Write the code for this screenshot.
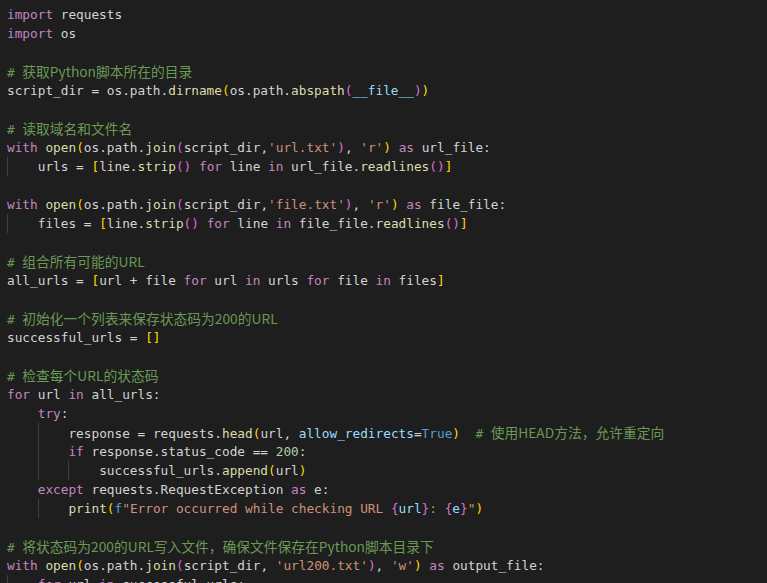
import React from 'react'

// token colours, VS Code Dark+ style
const C = {
  k: 'text-[#c586c0]',
  d: 'text-[#d4d4d4]',
  f: 'text-[#dcdcaa]',
  s: 'text-[#ce9178]',
  n: 'text-[#b5cea8]',
  p: 'text-[#9cdcfe]',
  b: 'text-[#569cd6]',
  y: 'text-[#ffd700]',
  m: 'text-[#da70d6]',
  c: 'text-[#6a9955]',
}

type Tok = [keyof typeof C, string]
type Line = { g?: number[]; t: Tok[] }

const lines: Line[] = [
  { t: [['k', 'import'], ['d', ' requests']] },
  { t: [['k', 'import'], ['d', ' os']] },
  { t: [] },
  { t: [['c', '# 获取Python脚本所在的目录']] },
  {
    t: [
      ['d', 'script_dir = os.path.'], ['f', 'dirname'], ['y', '('], ['d', 'os.path.'], ['f', 'abspath'],
      ['m', '('], ['p', '__file__'], ['m', ')'], ['y', ')'],
    ],
  },
  { t: [] },
  { t: [['c', '# 读取域名和文件名']] },
  {
    t: [
      ['k', 'with'], ['d', ' '], ['f', 'open'], ['y', '('], ['d', 'os.path.'], ['f', 'join'], ['m', '('],
      ['d', 'script_dir,'], ['s', "'url.txt'"], ['m', ')'], ['d', ', '], ['s', "'r'"], ['y', ')'], ['d', ' '],
      ['k', 'as'], ['d', ' url_file:'],
    ],
  },
  {
    g: [1],
    t: [
      ['d', 'urls = '], ['y', '['], ['d', 'line.'], ['f', 'strip'], ['m', '()'], ['d', ' '], ['k', 'for'],
      ['d', ' line '], ['k', 'in'], ['d', ' url_file.'], ['f', 'readlines'], ['m', '()'], ['y', ']'],
    ],
  },
  { t: [] },
  {
    t: [
      ['k', 'with'], ['d', ' '], ['f', 'open'], ['y', '('], ['d', 'os.path.'], ['f', 'join'], ['m', '('],
      ['d', 'script_dir,'], ['s', "'file.txt'"], ['m', ')'], ['d', ', '], ['s', "'r'"], ['y', ')'], ['d', ' '],
      ['k', 'as'], ['d', ' file_file:'],
    ],
  },
  {
    g: [1],
    t: [
      ['d', 'files = '], ['y', '['], ['d', 'line.'], ['f', 'strip'], ['m', '()'], ['d', ' '], ['k', 'for'],
      ['d', ' line '], ['k', 'in'], ['d', ' file_file.'], ['f', 'readlines'], ['m', '()'], ['y', ']'],
    ],
  },
  { t: [] },
  { t: [['c', '# 组合所有可能的URL']] },
  {
    t: [
      ['d', 'all_urls = '], ['y', '['], ['d', 'url + file '], ['k', 'for'], ['d', ' url '], ['k', 'in'],
      ['d', ' urls '], ['k', 'for'], ['d', ' file '], ['k', 'in'], ['d', ' files'], ['y', ']'],
    ],
  },
  { t: [] },
  { t: [['c', '# 初始化一个列表来保存状态码为200的URL']] },
  { t: [['d', 'successful_urls = '], ['y', '[]']] },
  { t: [] },
  { t: [['c', '# 检查每个URL的状态码']] },
  { t: [['k', 'for'], ['d', ' url '], ['k', 'in'], ['d', ' all_urls:']] },
  { g: [0], t: [['k', 'try'], ['d', ':']] },
  {
    g: [0, 1],
    t: [
      ['d', 'response = requests.'], ['f', 'head'], ['y', '('], ['d', 'url, '], ['p', 'allow_redirects'],
      ['d', '='], ['b', 'True'], ['y', ')'], ['d', '  '], ['c', '# 使用HEAD方法，允许重定向'],
    ],
  },
  { g: [0, 1], t: [['k', 'if'], ['d', ' response.status_code == '], ['n', '200'], ['d', ':']] },
  { g: [0, 1, 1], t: [['d', 'successful_urls.'], ['f', 'append'], ['y', '('], ['d', 'url'], ['y', ')']] },
  { g: [0], t: [['k', 'except'], ['d', ' requests.RequestException '], ['k', 'as'], ['d', ' e:']] },
  {
    g: [0, 1],
    t: [
      ['f', 'print'], ['y', '('], ['b', 'f'], ['s', '"Error occurred while checking URL '], ['m', '{'],
      ['p', 'url'], ['m', '}'], ['s', ': '], ['m', '{'], ['p', 'e'], ['m', '}'], ['s', '"'], ['y', ')'],
    ],
  },
  { t: [] },
  { t: [['c', '# 将状态码为200的URL写入文件，确保文件保存在Python脚本目录下']] },
  {
    t: [
      ['k', 'with'], ['d', ' '], ['f', 'open'], ['y', '('], ['d', 'os.path.'], ['f', 'join'], ['m', '('],
      ['d', 'script_dir, '], ['s', "'url200.txt'"], ['m', ')'], ['d', ', '], ['s', "'w'"], ['y', ')'], ['d', ' '],
      ['k', 'as'], ['d', ' output_file:'],
    ],
  },
  { g: [1], t: [['k', 'for'], ['d', ' url '], ['k', 'in'], ['d', ' successful_urls:']] },
]

function Comment({ text }: { text: string }) {
  // "# " stays in the mono font, the rest falls back to the CJK face
  const head = text.slice(0, 2)
  const rest = text.slice(2)
  return (
    <span className={C.c}>
      {head}
      <span className="font-['Noto_Sans_CJK_SC',sans-serif] text-[13.75px]">{rest}</span>
    </span>
  )
}

export default function App() {
  return (
    <div className="h-[583px] w-full overflow-hidden bg-[#1e1e1e] pt-[5px] pl-[7px] font-['DejaVu_Sans_Mono','Noto_Sans_CJK_SC',monospace] text-[12.76px] leading-[19px]">
      {lines.map((line, i) => (
        <div key={i} className="h-[19px] whitespace-pre">
          {(line.g || []).map((g, j) =>
            g ? (
              <span key={j} className="inline-block h-[19px] align-top shadow-[inset_1px_0_0_#404040]">
                {'    '}
              </span>
            ) : (
              <span key={j}>{'    '}</span>
            )
          )}
          {line.t.map(([kind, text], j) =>
            kind === 'c' ? <Comment key={j} text={text} /> : <span key={j} className={C[kind]}>{text}</span>
          )}
        </div>
      ))}
    </div>
  )
}
